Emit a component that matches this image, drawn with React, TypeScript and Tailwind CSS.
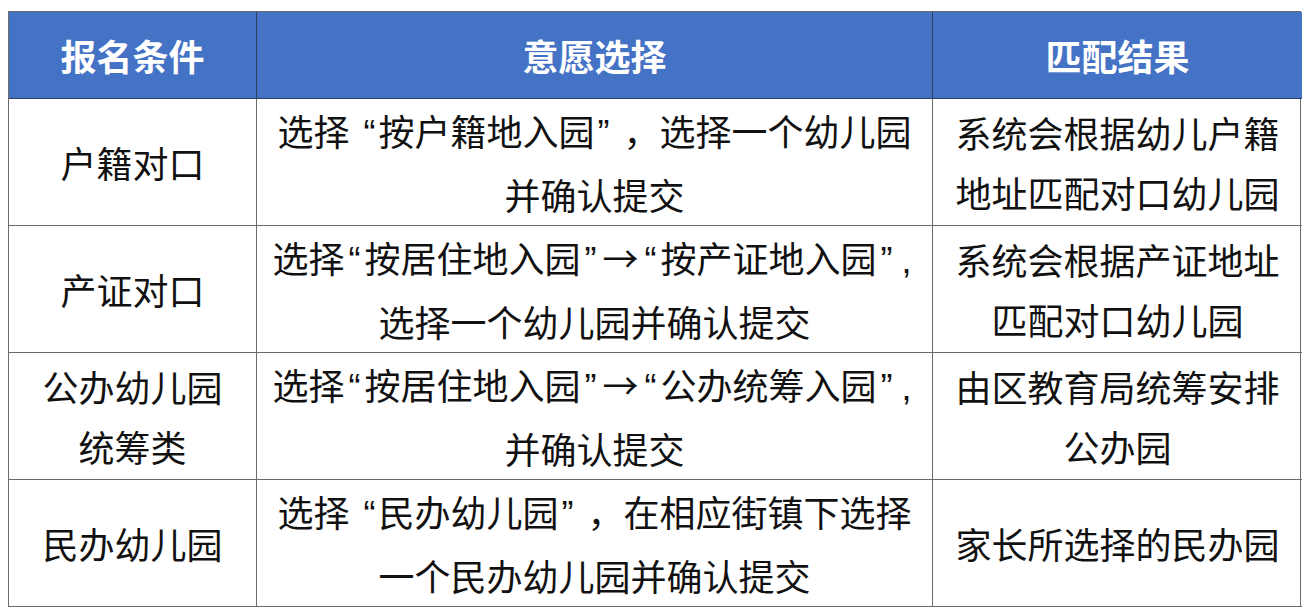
const font = { fontFamily: '"Noto Sans CJK SC", "Noto Sans", sans-serif' };
const latin = { fontFamily: '"Liberation Sans", sans-serif' };

// narrow (latin style) punctuation, as in rows 2 and 3
const N = ({ c, w = "w-[20px]" }: { c: string; w?: string }) => (
  <span className={`inline-block text-center ${w}`} style={latin}>
    {c}
  </span>
);

// wide punctuation boxes, as in rows 1 and 4
const Open = () => (
  <span className="inline-block w-[29px] pr-[3px] text-right" style={latin}>
    “
  </span>
);
const Close = () => (
  <>
    <span className="inline-block w-[29px] pl-[3px] text-left" style={latin}>
      ”
    </span>
    <span className="inline-block w-[36px] text-left">，</span>
  </>
);
const Arrow = () => <span className="inline-block w-[40px] text-center">→</span>;

const rows: { a: React.ReactNode[]; b: React.ReactNode[]; c: React.ReactNode[] }[] = [
  {
    a: ["户籍对口"],
    b: [
      <>
        选择<Open />按户籍地入园<Close />选择一个幼儿园
      </>,
      "并确认提交",
    ],
    c: ["系统会根据幼儿户籍", "地址匹配对口幼儿园"],
  },
  {
    a: ["产证对口"],
    b: [
      <>
        选择<N c="“" />按居住地入园<N c="”" />
        <Arrow />
        <N c="“" />按产证地入园<N c="”" />
        <N c="," />
      </>,
      "选择一个幼儿园并确认提交",
    ],
    c: ["系统会根据产证地址", "匹配对口幼儿园"],
  },
  {
    a: ["公办幼儿园", "统筹类"],
    b: [
      <>
        选择<N c="“" />按居住地入园<N c="”" />
        <Arrow />
        <N c="“" />公办统筹入园<N c="”" />
        <N c="," />
      </>,
      "并确认提交",
    ],
    c: ["由区教育局统筹安排", "公办园"],
  },
  {
    a: ["民办幼儿园"],
    b: [
      <>
        选择<Open />民办幼儿园<Close />在相应街镇下选择
      </>,
      "一个民办幼儿园并确认提交",
    ],
    c: ["家长所选择的民办园"],
  },
];

const Cell = ({ lines, last }: { lines: React.ReactNode[]; last?: boolean }) => (
  <div
    className={`flex h-[127px] flex-col items-center justify-center border-b border-[#6b6b6b] text-[36px] leading-[60px] text-[#111] ${
      last ? "" : "border-r"
    }`}
  >
    {lines.map((l, i) => (
      <div key={i} className="whitespace-nowrap">
        {l}
      </div>
    ))}
  </div>
);

export default function App() {
  return (
    <div className="h-[611px] w-[1309px] bg-white pl-2 pt-[11px]" style={font}>
      <div className="grid w-[1293px] grid-cols-[248px_676px_369px] border border-[#6b6b6b] border-b-0">
        {["报名条件", "意愿选择", "匹配结果"].map((h, i) => (
          <div
            key={h}
            className={`flex h-[87px] items-center justify-center bg-[#4472c4] text-[36px] font-bold text-white border-b border-[#2f3f5f] ${
              i < 2 ? "border-r" : ""
            }`}
          >
            {h}
          </div>
        ))}
        {rows.map((r, i) => (
          <div key={i} className="contents">
            <Cell lines={r.a} />
            <Cell lines={r.b} />
            <Cell lines={r.c} last />
          </div>
        ))}
      </div>
    </div>
  );
}
